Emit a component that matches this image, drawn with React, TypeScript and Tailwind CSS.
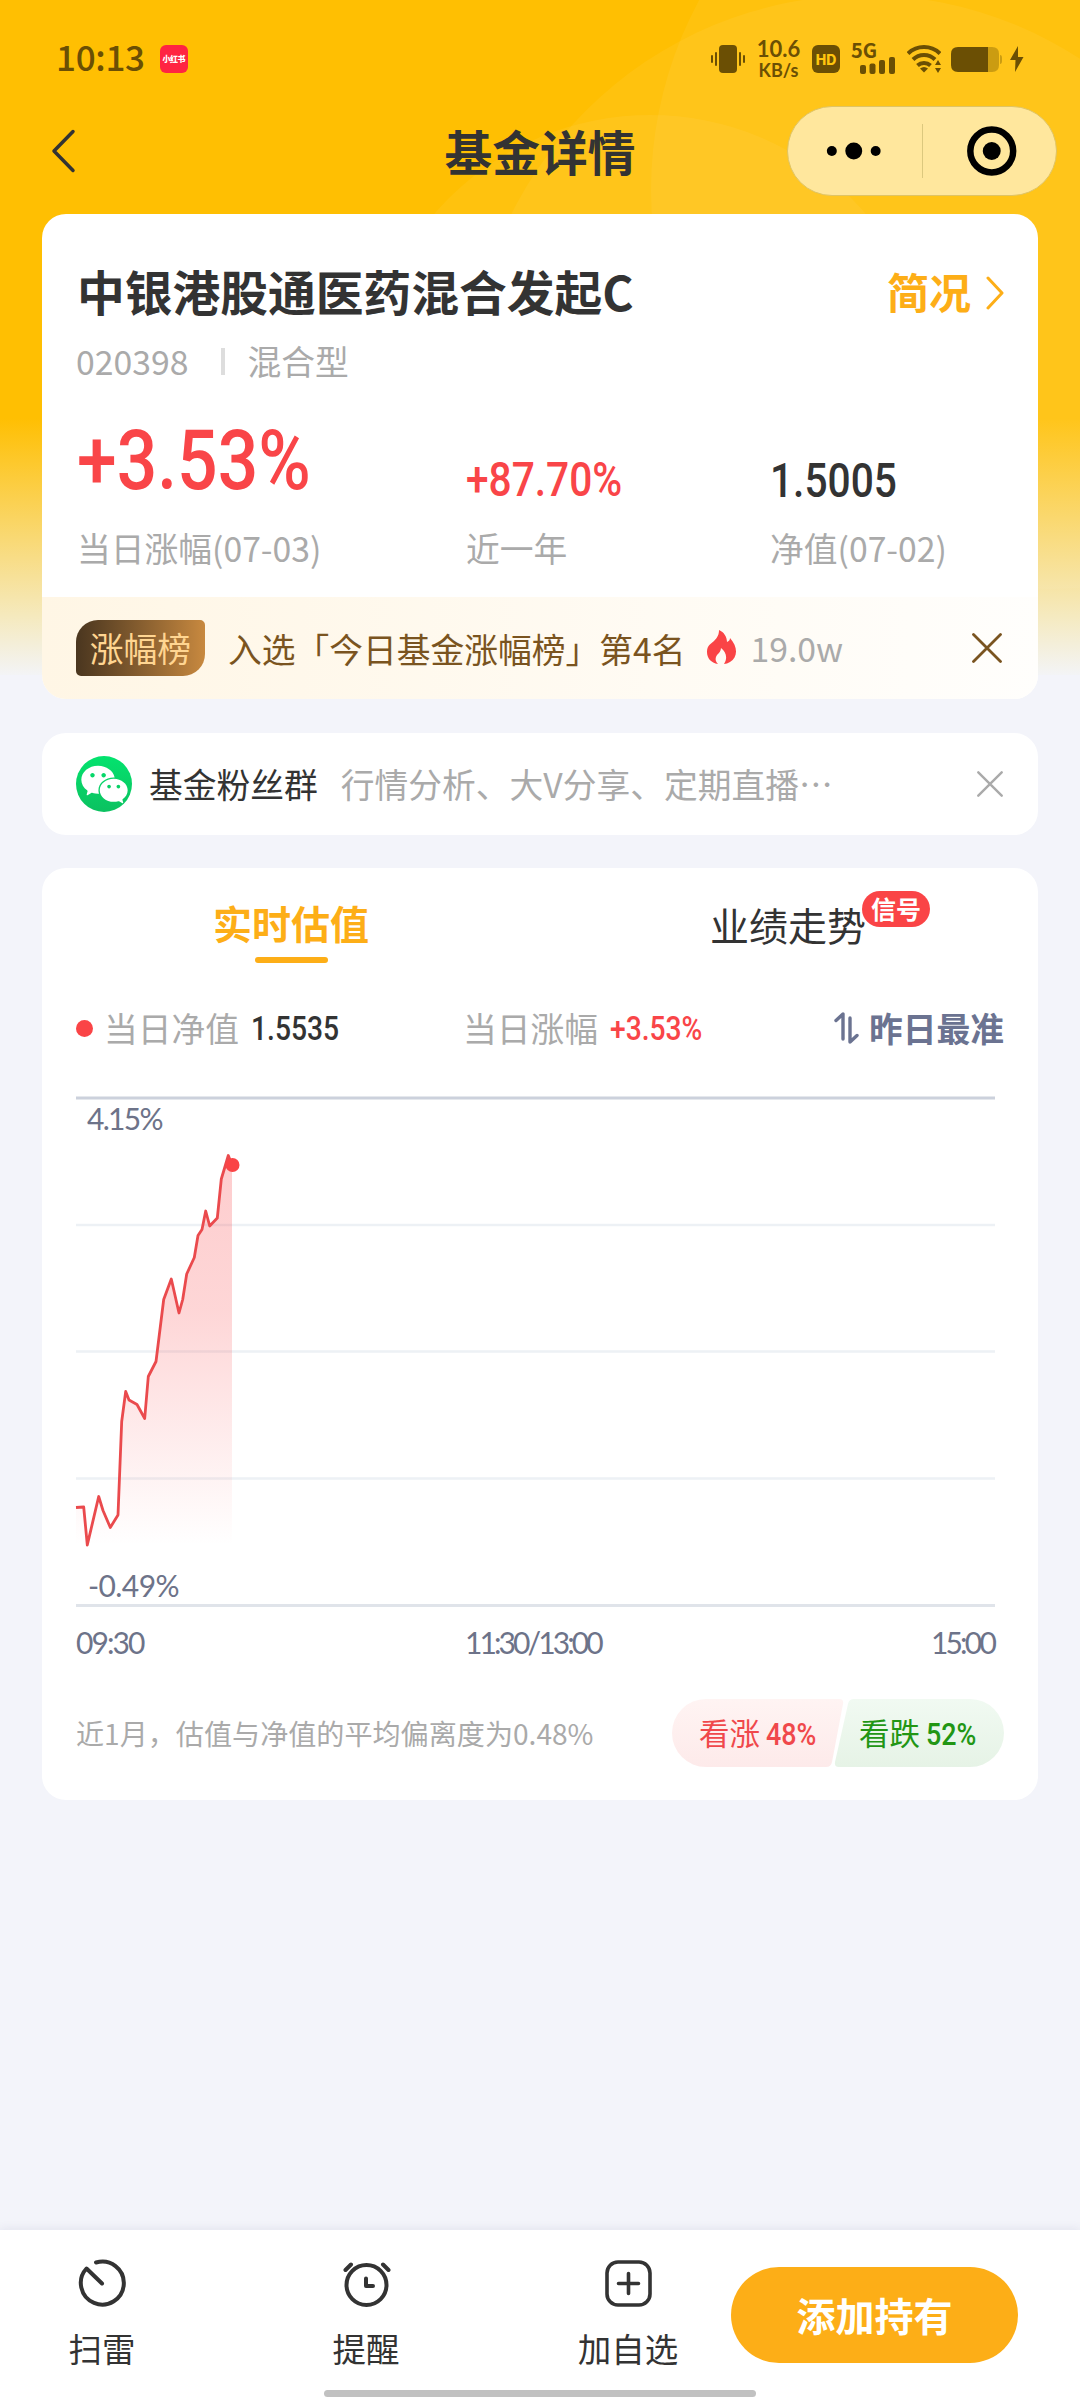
import React from "react";
import { AiFillWechat } from "react-icons/ai";

const points =
  "0,410.5 7.7,410 11.3,448 22.7,399.5 27,413.5 34.3,430.5 42,418 45.7,324.5 49.7,294.5 53,303 61,307.5 68.7,321.5 72.3,279.5 80,264.5 87.7,202.5 95.3,182 103,216 106.7,202.5 110.7,177 118.3,160.5 122,138.5 126,132.5 129.7,114 133.7,129 141.3,121 145.3,82 152.3,58.5 156,68";

const labels = ["当日涨幅(07-03)", "近一年", "净值(07-02)"];

function HeaderBackground() {
  return (
    <div className="absolute inset-x-0 top-0 h-[675px] overflow-hidden bg-[#ffbf02]">
      <svg width="1080" height="675" viewBox="0 0 1080 675" fill="#fff" fillOpacity="0.05">
        <circle cx="865" cy="390" r="395" />
        <circle cx="1050" cy="190" r="399" />
        <circle cx="650" cy="400" r="285" />
      </svg>
      <div className="absolute inset-x-0 bottom-0 h-[257px] bg-gradient-to-b from-[#f3f4fa]/0 via-[#f3f2e4]/84 via-78% to-[#f3f4f6]" />
    </div>
  );
}

function StatusBar() {
  return (
    <div className="flex h-[106px] items-center pt-[12px] pl-[56px] pr-[56px] text-[#6b4f04]">
      <span className="-mt-[7px] text-[35px] leading-none font-medium tracking-[-0.3px]">10:13</span>
      <span className="ml-[15px] flex h-[28px] w-[28px] items-center justify-center rounded-[6px] bg-[#ff2442]">
        <span className="text-[8px] leading-none font-black tracking-[-0.5px] text-white">小红书</span>
      </span>

      <div className="ml-auto flex items-center">
        <svg width="34" height="28" viewBox="0 0 34 28" fill="currentColor">
          <rect x="8" width="18" height="28" rx="4" />
          <rect x="4" y="7" width="2" height="14" rx="1" />
          <rect x="0" y="10" width="2" height="8" rx="1" />
          <rect x="28" y="7" width="2" height="14" rx="1" />
          <rect x="32" y="10" width="2" height="8" rx="1" />
        </svg>
        <div className="ml-[12px] flex w-[43px] flex-col items-center font-['Lato'] font-bold">
          <span className="text-[22px] leading-[22px]">10.6</span>
          <span className="text-[18px] leading-[20px]">KB/s</span>
        </div>
        <span className="ml-[12px] flex h-[28px] w-[28px] items-center justify-center rounded-[6px] bg-[#6b4f04] font-['Inter'] text-[14px] font-extrabold text-[#ffc60e]">
          HD
        </span>
        <div className="relative ml-[11px] h-[30px] w-[44px]">
          <span className="absolute -top-[3px] left-0 text-[20px] leading-[18px] font-bold">5G</span>
          <svg className="absolute bottom-0 left-[9px]" width="35" height="17" viewBox="0 0 35 17" fill="currentColor">
            <rect x="0" y="8" width="6" height="9" rx="2" />
            <rect x="9.5" y="6.5" width="6" height="10.5" rx="2" />
            <rect x="19" y="3" width="6" height="14" rx="2" />
            <rect x="29" y="0" width="6" height="17" rx="2" />
          </svg>
        </div>
        <svg className="ml-[12px]" width="34" height="28" viewBox="0 0 34 28" fill="none" stroke="currentColor" strokeWidth="4">
          <path d="M1 8.500a23 23 0 0 1 32 0" />
          <path d="M6 14.500a15.500 15.500 0 0 1 22 0" />
          <path d="M10.500 20.500a9.500 9.500 0 0 1 13 0" />
          <path d="M17 27.500l-4-4q4-3 8 0z" fill="currentColor" stroke="none" />
          <path d="M31 15l3 5h-6zM31 28l3-5h-6z" fill="currentColor" stroke="none" />
        </svg>
        <svg className="ml-[10px]" width="51" height="25" viewBox="0 0 51 25" fill="currentColor">
          <path d="M36 0h5q7 0 7 7v11q0 7-7 7h-5zM49 8q2 0 2 3v3q0 3-2 3z" opacity="0.35" />
          <path d="M7 0h30v25H7q-7 0-7-7V7q0-7 7-7z" />
        </svg>
        <svg className="ml-[8px]" width="14" height="26" viewBox="0 0 14 26" fill="currentColor">
          <path d="M8 0L0 14h5.500L5 26l8.500-15H8z" />
        </svg>
      </div>
    </div>
  );
}

function NavBar() {
  return (
    <div className="relative flex h-[90px] items-center justify-center">
      <svg className="absolute left-[51px] top-[23px]" width="25" height="44" viewBox="0 0 25 44" fill="none" stroke="#333" strokeWidth="3.5" strokeLinecap="round" strokeLinejoin="round">
        <path d="M22 2.500L3 22l19 19.500" />
      </svg>
      <h1 className="text-[47.75px] leading-none font-bold">基金详情</h1>
      <div className="absolute right-[23px] top-0 flex h-[90px] w-[270px] items-center rounded-full border border-[#dfc465] bg-[#ffe79d]">
        <svg width="134" height="60" viewBox="0 0 134 60">
          <circle cx="44" cy="30" r="5" />
          <circle cx="66" cy="30" r="8.5" />
          <circle cx="88" cy="30" r="5" />
        </svg>
        <span className="h-[54px] w-px bg-[#dcc87e]" />
        <svg width="134" height="60" viewBox="0 0 134 60">
          <circle cx="69" cy="30" r="21.5" fill="none" stroke="#000" strokeWidth="6.5" />
          <circle cx="69" cy="30" r="9" />
        </svg>
      </div>
    </div>
  );
}

function Close({ size, color }: { size: number; color: string }) {
  return (
    <svg width={size} height={size} viewBox="0 0 30 30" fill="none" stroke={color} strokeWidth="2.8" strokeLinecap="round">
      <path d="M1.500 1.500l27 27M28.500 1.500l-27 27" />
    </svg>
  );
}

function FundCard() {
  return (
    <section className="mt-[18px] h-[485px] overflow-hidden rounded-[24px] bg-white">
      <div className="h-[383px] pl-[35px] pr-[34px] pt-[46px]">
        <div className="flex h-[62px] items-center justify-between">
          <h2 className="text-[47.75px] leading-none font-bold">中银港股通医药混合发起C</h2>
          <div className="flex items-center text-[42px] leading-none font-bold text-[#fdae17]">
            简况
            <svg className="ml-[15px] mt-[3px]" width="18" height="34" viewBox="0 0 18 34" fill="none" stroke="#fdae17" strokeWidth="3" strokeLinecap="round" strokeLinejoin="round">
              <path d="M2 2l14 15L2 32" />
            </svg>
          </div>
        </div>
        <div className="mt-[19px] flex h-[40px] items-center text-[33.75px] leading-none text-[#aaa]">
          <span className="-ml-px">020398</span>
          <span className="ml-[33px] h-[27px] w-[4px] bg-[#ddd]" />
          <span className="ml-[22px]">混合型</span>
        </div>
        <div className="mt-[35px] grid h-[90px] grid-cols-[389px_304px_1fr] items-end font-['Roboto'] leading-none font-medium">
          <span className="origin-left scale-x-[0.85] whitespace-nowrap text-[84px] leading-[90px] text-[#f94548]">+3.53%</span>
          <span className="origin-left scale-x-[0.83] whitespace-nowrap text-[49px] leading-[52px] text-[#f94548]">+87.70%</span>
          <span className="origin-left scale-x-[0.83] whitespace-nowrap text-[49px] leading-[50px]">1.5005</span>
        </div>
        <div className="mt-[21px] grid h-[42px] grid-cols-[389px_304px_1fr] items-center text-[33.75px] leading-none text-[#aaa]">
          {labels.map((l) => (
            <span key={l}>{l}</span>
          ))}
        </div>
      </div>

      <div className="flex h-[102px] items-center bg-gradient-to-r from-[#fff6e5] to-[#fffefc] pl-[34px] pr-[36px] text-[33.75px] leading-none text-[#7a5420]">
        <span className="flex h-[56px] w-[129px] items-center justify-center rounded-tl-[22px] rounded-tr-[5px] rounded-br-[22px] rounded-bl-[5px] bg-gradient-to-r from-[#4a361f] to-[#c8893f] text-[#ffd591]">
          涨幅榜
        </span>
        <span className="ml-[23px] mt-[2px] whitespace-nowrap">入选「今日基金涨幅榜」第4名</span>
        <svg className="ml-[22px] -mt-[3px]" width="29" height="34" viewBox="0 0 29 34" fill="#fa4446">
          <path d="M12 0c5 2 8 7 8 12 2-1 3-2 3-4 8 9 8 19 0 24-2 1-4 2-6 2 4-6 2-12-3-16 0 3-2 5-4 7-2 3-2 6 1 9C4 33 0 28 0 22c0-7 4-8 7-11 4-4 5-7 5-11z" />
        </svg>
        <span className="ml-[14px] text-[#aaa]">19.0w</span>
        <span className="ml-auto">
          <Close size={30} color="#7a5420" />
        </span>
      </div>
    </section>
  );
}

function GroupCard() {
  return (
    <section className="mt-[34px] flex h-[102px] items-center rounded-[24px] bg-white pl-[34px] pr-[35px] text-[33.75px] leading-none">
      <span className="flex h-[56px] w-[56px] shrink-0 items-center justify-center rounded-full bg-gradient-to-b from-[#03e36e] to-[#0bc160]">
        <AiFillWechat size={53} color="#fff" />
      </span>
      <span className="ml-[17px] whitespace-nowrap">基金粉丝群</span>
      <span className="ml-[23px] whitespace-nowrap text-[#aaa]">行情分析、大V分享、定期直播…</span>
      <span className="ml-auto">
        <Close size={26} color="#aaa" />
      </span>
    </section>
  );
}

function Chart() {
  return (
    <div className="mt-[49px] font-['Lato'] text-[30px] leading-none text-[#6d7389]">
      <div className="relative h-[510px]">
        <svg className="block overflow-visible" width="919" height="510" viewBox="0 0 919 510">
          <defs>
            <linearGradient id="area" x1="0" y1="0" x2="0" y2="1">
              <stop offset="0" stopColor="#f94548" stopOpacity="0.27" />
              <stop offset="0.4" stopColor="#f94548" stopOpacity="0.22" />
              <stop offset="1" stopColor="#f94548" stopOpacity="0" />
            </linearGradient>
          </defs>
          <path d="M0 1h919" stroke="#ccd1dc" strokeWidth="3" />
          <path d="M0 128h919M0 254.500h919M0 381.500h919" stroke="#edf1f5" strokeWidth="2.5" />
          <path d="M0 508.500h919" stroke="#e0e4ea" strokeWidth="3" />
          <polygon points={`0,448 ${points} 156,448`} fill="url(#area)" />
          <polyline points={points} fill="none" stroke="#ea4a4d" strokeWidth="2.8" strokeLinejoin="round" />
          <circle cx="156.5" cy="68" r="7" fill="#fa4446" />
        </svg>
        <span className="absolute left-[11px] top-[6px] tracking-[-1.7px]">4.15%</span>
        <span className="absolute left-[12px] bottom-[7px] tracking-[-0.6px]">-0.49%</span>
      </div>
      <div className="relative mt-[20px] flex h-[30px] w-[918px] items-center justify-between">
        <span className="tracking-[-1.9px]">09:30</span>
        <span className="absolute left-[389px] tracking-[-2.9px]">11:30/13:00</span>
        <span className="tracking-[-2.8px]">15:00</span>
      </div>
    </div>
  );
}

function ValuationCard() {
  return (
    <section className="mt-[33px] h-[932px] rounded-[24px] bg-white pl-[34px] pr-[34px] pt-[34px]">
      <div className="flex h-[70px] text-[39px] leading-none">
        <div className="flex w-[430px] flex-col items-center pt-px">
          <span className="font-bold text-[#fdae17]">实时估值</span>
          <span className="mt-[15px] h-[6px] w-[73px] rounded-full bg-[#fdae17]" />
        </div>
        <div className="pl-[204px] pt-[3px]">
          <span className="relative block">
            业绩走势
            <span className="absolute -top-[14px] left-[152px] flex h-[36px] w-[68px] items-center justify-center rounded-full bg-[#fa4446] pb-[2px] text-[25px] font-bold text-white">
              信号
            </span>
          </span>
        </div>
      </div>

      <div className="mt-[36px] flex h-[40px] items-center whitespace-nowrap text-[33.75px] leading-none text-[#aaa]">
        <div className="flex w-[387px] items-center">
          <span className="h-[17px] w-[17px] rounded-full bg-[#fa4446]" />
          <span className="ml-[11px]">当日净值</span>
          <span className="ml-[12px] origin-left scale-x-[0.83] font-['Roboto'] text-[34px] font-medium text-[#333]">1.5535</span>
        </div>
        <span>当日涨幅</span>
        <span className="ml-[12px] w-[100px] origin-left scale-x-[0.83] font-['Roboto'] text-[34px] font-medium text-[#f94548]">+3.53%</span>
        <div className="ml-auto flex items-center font-bold text-[#6b7391]">
          <svg className="mr-[10px]" width="25" height="32" viewBox="0 0 25 32" fill="none" stroke="#6b7391" strokeWidth="3.4" strokeLinecap="round" strokeLinejoin="round">
            <path d="M2 8.500L9 2v25M16 6v24l7-6.500" />
          </svg>
          昨日最准
        </div>
      </div>

      <Chart />

      <div className="mt-[42px] flex h-[68px] items-center justify-between">
        <span className="text-[28.1px] leading-none text-[#aaa]">近1月，估值与净值的平均偏离度为0.48%</span>
        <div className="relative h-[68px] w-[332px]">
          <svg width="332" height="68" viewBox="0 0 332 68">
            <defs>
              <linearGradient id="up" x1="0" y1="0" x2="0" y2="1">
                <stop offset="0" stopColor="#fff4f3" />
                <stop offset="1" stopColor="#fdeaea" />
              </linearGradient>
              <linearGradient id="down" x1="0" y1="0" x2="0" y2="1">
                <stop offset="0" stopColor="#f1faf2" />
                <stop offset="1" stopColor="#e6f3e6" />
              </linearGradient>
            </defs>
            <path d="M34 0h133q5 0 4 5l-11 58q-1 5-6 5H34a34 34 0 0 1 0-68z" fill="url(#up)" />
            <path d="M182 0h116a34 34 0 0 1 0 68H167q-5 0-4-5l13-58q1-5 6-5z" fill="url(#down)" />
          </svg>
          <div className="absolute inset-0 flex items-center pl-[27px] text-[30.5px] leading-none">
            <span className="w-[160px] whitespace-nowrap text-[#f0484b]">
              看涨
              <span className="ml-[6px] inline-block origin-left scale-x-[0.84] font-['Roboto'] text-[32px] font-medium">48%</span>
            </span>
            <span className="whitespace-nowrap text-[#229614]">
              看跌
              <span className="ml-[6px] inline-block origin-left scale-x-[0.84] font-['Roboto'] text-[32px] font-medium">52%</span>
            </span>
          </div>
        </div>
      </div>
    </section>
  );
}

function BottomBar() {
  return (
    <footer className="relative mt-auto flex h-[170px] bg-white text-[33.5px] leading-none shadow-[0_-2px_8px_rgba(60,70,110,0.08)]">
      <div className="flex w-[204px] flex-col items-center pt-[28px]">
        <svg width="50" height="50" viewBox="0 0 50 50" fill="none" stroke="#333" strokeWidth="4" strokeLinecap="round" strokeLinejoin="round">
          <path d="M19 4.500A21.500 21.500 0 1 1 9.500 10.500L25 25.500" />
        </svg>
        <span className="mt-[23px]">扫雷</span>
      </div>
      <div className="flex w-[324px] flex-col items-center pt-[28px]">
        <svg width="50" height="50" viewBox="0 0 50 50" fill="none" stroke="#333" strokeWidth="4" strokeLinecap="round" strokeLinejoin="round">
          <circle cx="25.5" cy="27" r="20" />
          <path d="M25 20.500v7.500h7M10 6.500l-5.500 5.500M42 6.500l5.500 5.500" />
        </svg>
        <span className="mt-[23px]">提醒</span>
      </div>
      <div className="flex w-[200px] flex-col items-center pt-[28px]">
        <svg width="50" height="50" viewBox="0 0 50 50" fill="none" stroke="#333" strokeWidth="3.6" strokeLinecap="round">
          <rect x="4" y="4" width="43" height="43" rx="11" />
          <path d="M25.500 15.500v20M15.500 25.500h20" />
        </svg>
        <span className="mt-[23px]">加自选</span>
      </div>
      <button className="ml-[3px] mt-[37px] h-[96px] w-[287px] rounded-full bg-[#fdae17] pb-[2px] text-[39px] font-bold text-white">添加持有</button>
      <span className="absolute bottom-[3px] left-[324px] h-[7px] w-[432px] rounded-full bg-[#c1c1c1]" />
    </footer>
  );
}

export default function App() {
  return (
    <div className="relative h-[2400px] w-[1080px] overflow-hidden bg-[#f3f4fa] font-['Noto_Sans_CJK_SC',sans-serif] text-[#333]">
      <HeaderBackground />
      <div className="relative flex h-full flex-col">
        <StatusBar />
        <NavBar />
        <main className="px-[42px]">
          <FundCard />
          <GroupCard />
          <ValuationCard />
        </main>
        <BottomBar />
      </div>
    </div>
  );
}
